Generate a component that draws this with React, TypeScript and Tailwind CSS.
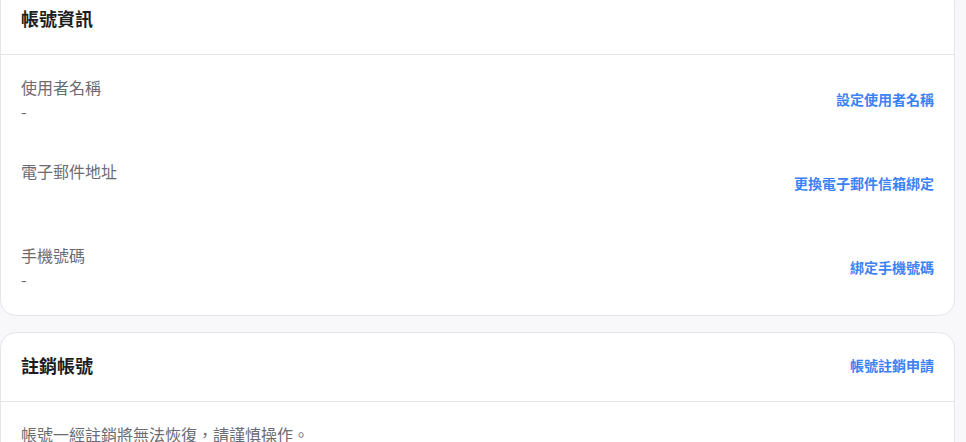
import React from "react";

type Field = {
  label: string;
  value: string;
  action: string;
};

const fields: Field[] = [
  { label: "使用者名稱", value: "-", action: "設定使用者名稱" },
  { label: "電子郵件地址", value: "", action: "更換電子郵件信箱綁定" },
  { label: "手機號碼", value: "-", action: "綁定手機號碼" },
];

const font = "font-['Noto_Sans_CJK_TC','Noto_Sans',sans-serif]";

const App: React.FC = () => {
  return (
    <div className={`min-h-screen bg-[#f8f8fa] ${font} overflow-hidden`}>
      <div className="w-[955px] -mt-[15px] flex flex-col gap-4">
        <section className="rounded-2xl border border-[#e4e4ea] bg-white">
          <div className="h-[69px] px-5 pb-1 flex items-center border-b border-[#e4e4ea]">
            <h2 className="text-lg font-bold text-[#1d1d1f]">帳號資訊</h2>
          </div>
          <div className="px-5 pt-5 pb-6 flex flex-col gap-9">
            {fields.map((f) => (
              <div key={f.label} className="flex items-center justify-between">
                <div className="flex flex-col">
                  <span className="text-base leading-6 text-[#6b6b73]">{f.label}</span>
                  <span className="text-base leading-6 h-6 text-[#6b6b73]">{f.value}</span>
                </div>
                <button className="text-sm font-bold text-[#3b82f6]">{f.action}</button>
              </div>
            ))}
          </div>
        </section>

        <section className="rounded-2xl border border-[#e4e4ea] bg-white">
          <div className="h-[69px] px-5 pb-1 flex items-center justify-between border-b border-[#e4e4ea]">
            <h2 className="text-lg font-bold text-[#1d1d1f]">註銷帳號</h2>
            <button className="text-sm font-bold text-[#3b82f6]">帳號註銷申請</button>
          </div>
          <div className="px-5 pt-5 pb-6">
            <p className="text-base leading-6 text-[#6b6b73]">帳號一經註銷將無法恢復，請謹慎操作。</p>
          </div>
        </section>
      </div>
    </div>
  );
};

export default App;
